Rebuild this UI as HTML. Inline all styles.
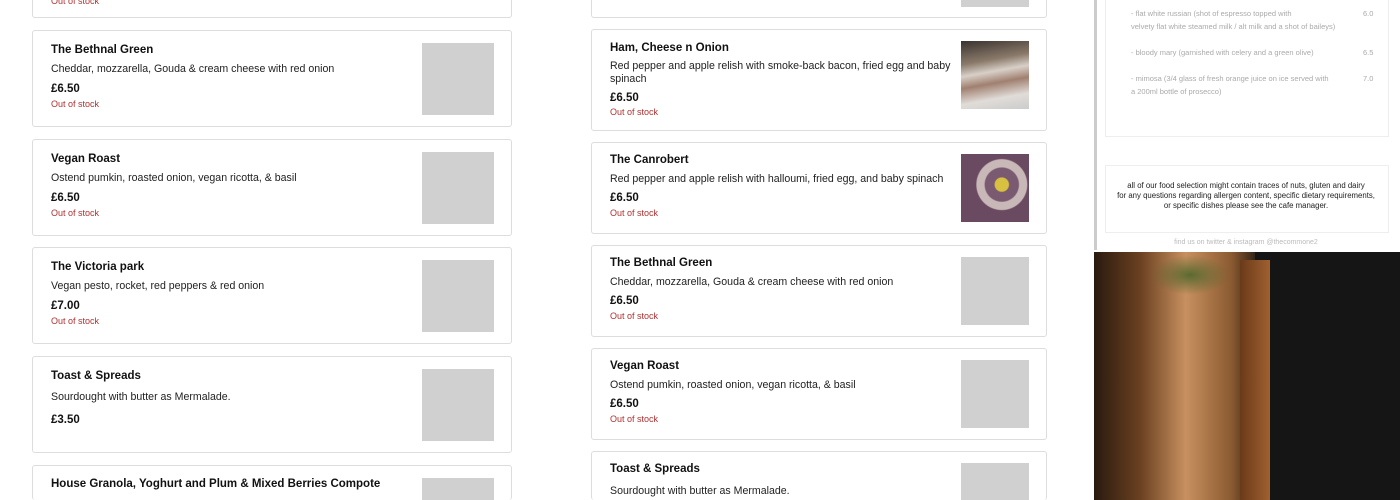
<!DOCTYPE html><html style="overflow:hidden;height:500px"><head><style>
body{margin:0;width:1400px;height:500px;overflow:hidden;background:#fff;font-family:"Liberation Sans",sans-serif;position:relative}
.c{position:absolute;border:1px solid #ddd;border-radius:3px;background:#fff;box-sizing:border-box;overflow:hidden}
.c .t{position:absolute;left:18px;font-size:11.5px;font-weight:bold;color:#111}
.c .d{position:absolute;left:18px;font-size:10.6px;color:#222;line-height:13px}
.c .p{position:absolute;left:18px;font-size:11.5px;font-weight:bold;color:#111}
.c .o{position:absolute;left:18px;font-size:9px;color:#b03030}
.c .i{position:absolute;background:#d0d0d0}
.r{position:absolute;font-size:7.5px;color:#aaa}
</style></head><body>
<div class="c" style="left:32px;top:-80px;width:480px;height:98px"><div class="o" style="top:75px">Out of stock</div></div>
<div class="c" style="left:32px;top:30px;width:480px;height:97px"><div class="t" style="top:13px">The Bethnal Green</div><div class="d" style="top:32px">Cheddar, mozzarella, Gouda &amp; cream cheese with red onion</div><div class="p" style="top:52px">£6.50</div><div class="o" style="top:68px">Out of stock</div><div class="i" style="left:389px;top:12px;width:72px;height:72px"></div></div>
<div class="c" style="left:32px;top:139px;width:480px;height:97px"><div class="t" style="top:13px">Vegan Roast</div><div class="d" style="top:32px">Ostend pumkin, roasted onion, vegan ricotta, &amp; basil</div><div class="p" style="top:52px">£6.50</div><div class="o" style="top:68px">Out of stock</div><div class="i" style="left:389px;top:12px;width:72px;height:72px"></div></div>
<div class="c" style="left:32px;top:247px;width:480px;height:97px"><div class="t" style="top:13px">The Victoria park</div><div class="d" style="top:32px">Vegan pesto, rocket, red peppers &amp; red onion</div><div class="p" style="top:52px">£7.00</div><div class="o" style="top:68px">Out of stock</div><div class="i" style="left:389px;top:12px;width:72px;height:72px"></div></div>
<div class="c" style="left:32px;top:356px;width:480px;height:97px"><div class="t" style="top:13px">Toast &amp; Spreads</div><div class="d" style="top:34px">Sourdought with butter as Mermalade.</div><div class="p" style="top:57px">£3.50</div><div class="i" style="left:389px;top:12px;width:72px;height:72px"></div></div>
<div class="c" style="left:32px;top:465px;width:480px;height:35px;border-bottom:none"><div class="t" style="top:12px">House Granola, Yoghurt and Plum &amp; Mixed Berries Compote</div><div class="i" style="left:389px;top:12px;width:72px;height:72px"></div></div>
<div class="c" style="left:591px;top:-80px;width:456px;height:98px"><div class="i" style="left:369px;top:70px;width:68px;height:16px"></div></div>
<div class="c" style="left:591px;top:29px;width:456px;height:102px"><div class="t" style="top:12px">Ham, Cheese n Onion</div><div class="d" style="top:30px;width:345px">Red pepper and apple relish with smoke-back bacon, fried egg and baby spinach</div><div class="p" style="top:62px">£6.50</div><div class="o" style="top:77px">Out of stock</div><div class="i" style="left:369px;top:11px;width:68px;height:68px;background:linear-gradient(170deg,#3a3330 0%,#8a7a6a 30%,#d8d0c8 45%,#a08070 60%,#e0dcd8 80%,#ccc 100%)"></div></div>
<div class="c" style="left:591px;top:142px;width:456px;height:92px"><div class="t" style="top:11px">The Canrobert</div><div class="d" style="top:30px">Red pepper and apple relish with halloumi, fried egg, and baby spinach</div><div class="p" style="top:49px">£6.50</div><div class="o" style="top:65px">Out of stock</div><div class="i" style="left:369px;top:11px;width:68px;height:68px;background:radial-gradient(circle at 60% 45%,#d8c040 0 12%,#7a5a70 14% 30%,#c9b8b8 32% 45%,#6a4a60 47%)"></div></div>
<div class="c" style="left:591px;top:245px;width:456px;height:92px"><div class="t" style="top:11px">The Bethnal Green</div><div class="d" style="top:30px">Cheddar, mozzarella, Gouda &amp; cream cheese with red onion</div><div class="p" style="top:49px">£6.50</div><div class="o" style="top:65px">Out of stock</div><div class="i" style="left:369px;top:11px;width:68px;height:68px"></div></div>
<div class="c" style="left:591px;top:348px;width:456px;height:92px"><div class="t" style="top:11px">Vegan Roast</div><div class="d" style="top:30px">Ostend pumkin, roasted onion, vegan ricotta, &amp; basil</div><div class="p" style="top:49px">£6.50</div><div class="o" style="top:65px">Out of stock</div><div class="i" style="left:369px;top:11px;width:68px;height:68px"></div></div>
<div class="c" style="left:591px;top:451px;width:456px;height:49px;border-bottom:none"><div class="t" style="top:11px">Toast &amp; Spreads</div><div class="d" style="top:33px">Sourdought with butter as Mermalade.</div><div class="i" style="left:369px;top:11px;width:68px;height:68px"></div></div>
<div style="position:absolute;left:1094px;top:0;width:306px;height:250px;background:#fff;border-left:3px solid #ccc;box-sizing:border-box"></div>
<div style="position:absolute;left:1105px;top:-5px;width:282px;height:140px;border:1px solid #eee"></div>
<div class="r" style="left:1131px;top:9px">- flat white russian (shot of espresso topped with</div>
<div class="r" style="left:1131px;top:22px">velvety flat white steamed milk / alt milk and a shot of baileys)</div>
<div class="r" style="left:1363px;top:9px">6.0</div>
<div class="r" style="left:1131px;top:48px">- bloody mary (garnished with celery and a green olive)</div>
<div class="r" style="left:1363px;top:48px">6.5</div>
<div class="r" style="left:1131px;top:74px">- mimosa (3/4 glass of fresh orange juice on ice served with</div>
<div class="r" style="left:1131px;top:87px">a 200ml bottle of prosecco)</div>
<div class="r" style="left:1363px;top:74px">7.0</div>
<div style="position:absolute;left:1105px;top:165px;width:282px;height:66px;border:1px solid #eee"></div>
<div style="position:absolute;left:1105px;top:181px;width:282px;text-align:center;font-size:7.8px;line-height:10px;color:#222">all of our food selection might contain traces of nuts, gluten and dairy<br>for any questions regarding allergen content, specific dietary requirements,<br>or specific dishes please see the cafe manager.</div>
<div class="r" style="left:1105px;top:239px;width:282px;text-align:center;font-size:7px;color:#bbb">find us on twitter &amp; instagram @thecommone2</div>
<div style="position:absolute;left:1094px;top:252px;width:306px;height:248px;background:linear-gradient(90deg,#2a1a10 0%,#6a4020 15%,#c89060 30%,#8a5a30 45%,#1a1512 55%,#141414 100%)"></div>
<div style="position:absolute;left:1255px;top:252px;width:145px;height:248px;background:#151515"></div>
<div style="position:absolute;left:1240px;top:260px;width:30px;height:240px;background:linear-gradient(90deg,#6a3a1a,#a06030)"></div>
<div style="position:absolute;left:1150px;top:255px;width:80px;height:40px;background:radial-gradient(ellipse,#5a6a30,transparent 70%)"></div>
</body></html>
